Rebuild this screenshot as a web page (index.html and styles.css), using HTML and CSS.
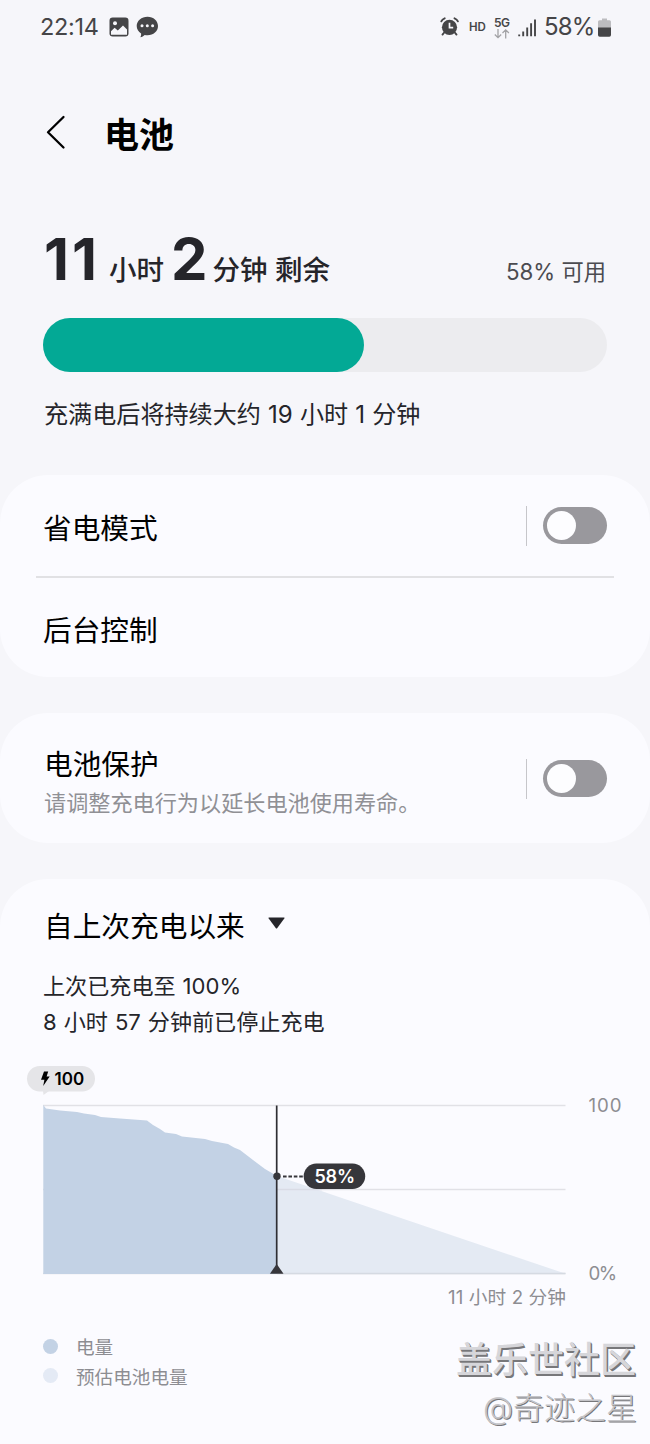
FILE: index.html
```html
<!DOCTYPE html>
<html lang="zh-CN">
<head>
<meta charset="utf-8">
<title>电池</title>
<link rel="stylesheet" href="styles.css">
</head>
<body>
<div class="statusbar">
  <span class="clock">22:14</span>
  <svg class="icoPic" width="20" height="20" viewBox="0 0 20 20"><rect x="0.5" y="0.5" width="19" height="19" rx="3.2" fill="#454547"/><circle cx="6" cy="6.2" r="2" fill="#f6f6fa"/><path d="M2 14.2L5.6 10.8L8.8 13.4L14 8.6L18 12.4V17.8H2Z" fill="#f6f6fa"/></svg>
  <svg class="icoChat" width="23" height="22" viewBox="0 0 23 22"><path d="M11.5 0.7C17.500 0.7 22 4.800 22 10C22 15.200 17.500 19.200 11.500 19.200C10.500 19.200 9.600 19.100 8.700 18.900C7.500 20.200 6.100 20.900 4.400 21.200C5.100 20 5.300 18.700 5.100 17.500C2.500 15.900 0.700 13.200 0.700 10C0.700 4.800 5.500 0.700 11.500 0.700Z" fill="#454547"/><circle cx="6" cy="9.800" r="1.500" fill="#f6f6fa"/><circle cx="11.300" cy="9.800" r="1.500" fill="#f6f6fa"/><circle cx="16.600" cy="9.800" r="1.500" fill="#f6f6fa"/></svg>
  <span class="space"></span>
  <svg class="icoAlarm" width="20" height="20" viewBox="0 0 20 20"><circle cx="9.500" cy="10.300" r="7.600" fill="#454547"/><path d="M1.300 4.300Q2.200 2.200 4.700 1.300M14.500 1.300Q17 2.200 17.900 4.300M4.200 15.500L2.500 17.600M14.800 15.500L16.500 17.600" fill="none" stroke="#454547" stroke-width="1.900" stroke-linecap="round"/><path d="M9.500 5.800V10.700H13.200" fill="none" stroke="#f6f6fa" stroke-width="1.700"/></svg>
  <span class="hd">HD</span>
  <span class="net">5G<svg width="16" height="10" viewBox="0 0 16 10"><path d="M4 0V8.600M0.800 5.500L4 8.700L7.200 5.500M11.700 9.500V1M8.500 4L11.700 0.900L14.900 4" fill="none" stroke="#a3a3a6" stroke-width="1.300"/></svg></span>
  <svg class="icoSignal" width="18" height="18" viewBox="0 0 18 18"><path d="M1.200 15.500V17.300M5.200 12.500V17.300M9.200 8.500V17.300M13.100 4.300V17.300M17 0.500V17.300" stroke="#454547" stroke-width="1.900" fill="none"/></svg>
  <span class="pct">58%</span>
  <svg class="icoBatt" width="13" height="19" viewBox="0 0 13 19"><path d="M4 0.500H9V2.300H11.500Q13 2.300 13 3.800V10H0V3.800Q0 2.300 1.500 2.300H4Z" fill="#bcbcbf"/><path d="M0 9.500H13V17Q13 18.700 11.300 18.700H1.700Q0 18.700 0 17Z" fill="#454547"/></svg>
</div>

<div class="titlebar">
  <svg width="22" height="36" viewBox="0 0 22 36"><path d="M18.500 2L3 17.300L18.500 32.500" fill="none" stroke="#000" stroke-width="2.300" stroke-linecap="round" stroke-linejoin="round"/></svg>
  <h1>电池</h1>
</div>

<div class="summary">
  <div class="remain">
    <div class="time"><b class="h">11</b><span class="u1">小时</span><b>2</b><span class="u2">分钟 剩余</span></div>
    <div class="avail">58% 可用</div>
  </div>
  <div class="bar"><div class="fill" style="width:57%"></div></div>
  <p class="full">充满电后将持续大约 19 小时 1 分钟</p>
</div>

<div class="card modes">
  <div class="row rowTop">
    <span class="label">省电模式</span>
    <span class="switch"><i></i></span>
  </div>
  <div class="row rowBottom">
    <span class="label">后台控制</span>
  </div>
</div>

<div class="card protect">
  <div class="text">
    <div class="label">电池保护</div>
    <div class="hint">请调整充电行为以延长电池使用寿命。</div>
  </div>
  <span class="switch"><i></i></span>
</div>

<div class="card usage">
  <div class="since"><span class="label">自上次充电以来</span><svg width="17" height="12" viewBox="0 0 17 12"><path d="M1 0.500H16Q17 0.500 16.300 1.500L9.300 11Q8.500 12 7.700 11L0.700 1.500Q0 0.500 1 0.500Z" fill="#25252a"/></svg></div>
  <p class="last">上次已充电至 100%<br>8 小时 57 分钟前已停止充电</p>
  <svg class="chart" width="650" height="260" viewBox="0 1060 650 260">
    <!-- grid -->
    <path d="M43 1105.500H565.500M43 1189.500H565.500M43 1273.500H565.500" stroke="#e1e1e6" stroke-width="1.600"/>
    <!-- estimated and used level -->
    <path d="M277 1176L565 1273.500H277Z" fill="#e4eaf3"/>
    <path d="M277 1189.500H322" stroke="#d9dce5" stroke-width="1.500"/>
    <path d="M43.300 1105L46 1108.500L60 1110.500L77 1112L84 1113.500L95 1115L101 1117L120 1118.500L147 1120.500L153 1125L160 1129L165 1132.500L176 1134L182 1136.500L205 1139L212 1141L228 1144L234 1147.500L240 1150L253 1160L265 1169L277 1176V1274H43.300Z" fill="#c3d2e5"/>
    <path d="M277 1273.500H565.500" stroke="#d5dae2" stroke-width="1.300"/>
    <!-- start badge -->
    <rect x="27" y="1066" width="68" height="25.500" rx="12.700" fill="#e5e5e8"/>
    <path d="M43 1091H49L43.500 1095Z" fill="#e5e5e8"/>
    <path d="M44 1071.500H48.200L46.600 1076.500H49.700L43.200 1086L44.400 1079.700H41Z" fill="#000"/>
    <text class="badge" x="54.500" y="1085.300">100</text>
    <!-- now marker -->
    <path d="M276.700 1105.500V1273" stroke="#2e2e33" stroke-width="1.700"/>
    <path d="M276.700 1264L283.500 1273.700H269.900Z" fill="#36363b"/>
    <circle cx="277" cy="1176.300" r="3.700" fill="#36363b"/>
    <path d="M283 1176.500H304" stroke="#36363b" stroke-width="1.800" stroke-dasharray="3.600 1.800"/>
    <rect x="303.700" y="1163.500" width="61.500" height="25.500" rx="12.700" fill="#36363b"/>
    <text class="badge now" x="314.500" y="1183">58%</text>
    <text class="axis hundred" x="588.500" y="1112">100</text>
    <text class="axis zero" x="588.500" y="1279.500">0%</text>
    <text class="axis" x="448" y="1304.300" textLength="118">11 小时 2 分钟</text>
  </svg>
  <div class="legend">
    <div><i class="dot used"></i>电量</div>
    <div><i class="dot est"></i>预估电池电量</div>
  </div>
</div>

<div class="mark"><div class="site">盖乐世社区</div><div class="user">@奇迹之星</div></div>
</body>
</html>
```
FILE: styles.css
```css
* {box-sizing:border-box}
body {
    position: relative;
    margin: 0;
    width: 650px;
    height: 1444px;
    overflow: hidden;
    background-color:#f6f6fa;
    color:#000;
    font-family: Inter, "Noto Sans CJK SC", sans-serif;
}
h1, p {margin:0;font-weight:normal}
svg {display:block;flex:none}

.statusbar {
    display: flex;
    align-items: center;
    height: 54px;
    padding: 0 39px 0 40px;
    color:#454547;
    white-space: nowrap;
}
.clock {
    width: 69px;
    margin-top: -2px;
    font-size: 23.5px;
    letter-spacing: -0.3px;
}
.icoChat {margin-left:7px}
.space {flex:1}
.hd {
    margin-left: 9px;
    width: 25px;
    font-size: 11.5px;
    font-weight: 600;
}
.net {
    width: 24px;
    font-size: 12px;
    line-height: 13px;
    font-weight: 600;
    letter-spacing: -0.5px;
}
.icoSignal {margin-top:2px}
.pct {
    margin: -1px 0 0 8px;
    width: 54px;
    font-size: 24px;
    letter-spacing: -0.8px;
}

.titlebar {
    display: flex;
    align-items: center;
    height: 158px;
    padding-left: 45px;
}
.titlebar h1 {
    margin-left: 37px;
    padding-top: 4px;
    font-size: 35px;
    line-height: 50px;
    font-weight: 700;
}

.summary {
    height: 263px;
    padding: 17px 43px 0;
}
.remain {
    display: flex;
    justify-content: space-between;
    align-items: baseline;
    height: 89px;
    color:#25252a;
    white-space: nowrap;
}
.time {
    font-size: 27.5px;
    line-height: 60px;
    font-weight: 500;
}
.time b {font-size:58px}
.time .h {
    margin-left: 1px;
    letter-spacing: 3px;
}
.u1 {margin:0 7px 0 9px}
.u2 {margin-left:5px}
.avail {
    margin-right: 1px;
    font-size: 22.3px;
    color:#4b4b50;
}
.bar {
    height: 54px;
    border-radius: 27px;
    background-color:#ececef;
}
.fill {
    height: 54px;
    border-radius: 27px;
    background-color:#03a995;
}
.full {
    margin: 25px 0 0 1px;
    font-size: 24.1px;
    line-height: 36px;
    word-spacing: 0.4px;
    color:#25252a;
}

.card {
    border-radius: 48px;
    background-color:#fbfbff;
}
.label {
    padding-left: 1px;
    font-size: 28.7px;
    line-height: 42px;
}
.row {
    display: flex;
    align-items: center;
    justify-content: space-between;
    margin: 0 36px;
    padding: 0 7px 0 7px;
}
.row .label {padding:6px 0 0}
.modes {height:202px}
.rowTop {
    height: 103px;
    border-bottom: 2px solid #e1e1e4;
}
.rowBottom {height:99px}
.switch {
    position: relative;
    width: 64px;
    height: 37px;
    border-radius: 19px;
    background-color:#99989d;
}
.switch i {
    display: block;
    width: 29px;
    height: 29px;
    margin: 4px;
    border-radius: 50%;
    background-color:#fdfdff;
}
.switch:before {
    content: "";
    position: absolute;
    left: -17px;
    top: -1px;
    width: 1px;
    height: 40px;
    background-color:#c6c6ca;
}

.protect {
    display: flex;
    justify-content: space-between;
    align-items: center;
    height: 130px;
    margin-top: 36px;
    padding: 0 43px;
}
.protect .text {padding-top:8px}
.hint {
    padding-left: 1px;
    font-size: 22.15px;
    line-height: 34px;
    color:#909095;
}

.usage {
    height: 612px;
    margin-top: 36px;
    padding-top: 27px;
}
.since {
    display: flex;
    align-items: center;
    gap: 23px;
    padding-left: 43px;
}
.since svg {margin-bottom:8px}
.last {
    margin: 21px 0 0 43px;
    font-size: 22.1px;
    line-height: 35.5px;
    word-spacing: 0.8px;
    color:#25252a;
}
.chart {margin-top:20px}
.badge {
    font-size: 17px;
    font-weight: 600;
}
.now {
    font-size: 18px;
    letter-spacing: -0.2px;
    fill:#fff;
}
.axis {
    font-size: 18.7px;
    fill:#8d8d92;
}
.hundred {letter-spacing:0.9px}
.zero {letter-spacing:-1.5px}
.legend {
    margin: 13px 0 0 43px;
    font-size: 18.6px;
    line-height: 29.5px;
    color:#8d8d92;
}
.legend div {display:flex;align-items:center}
.dot {
    width: 15px;
    height: 15px;
    margin: 0 18px 3px 0;
    border-radius: 50%;
}
.used {background-color:#c3d2e5}
.est {background-color:#e4eaf5}

.mark {
    position: absolute;
    right: 14px;
    top: 1335px;
    text-align: right;
    color:#d6d6da;
    text-shadow: 1px 1px 0 #77777a, 1.5px 1.5px 0 #77777a;
}
.site {
    font-size: 36px;
    line-height: 50px;
    font-weight: 500;
}
.user {
    margin-right: -1px;
    font-size: 31px;
    line-height: 45px;
    font-weight: 300;
    color:#c4c4c8;
    text-shadow: 1px 1px 0 #77777a;
}
```
